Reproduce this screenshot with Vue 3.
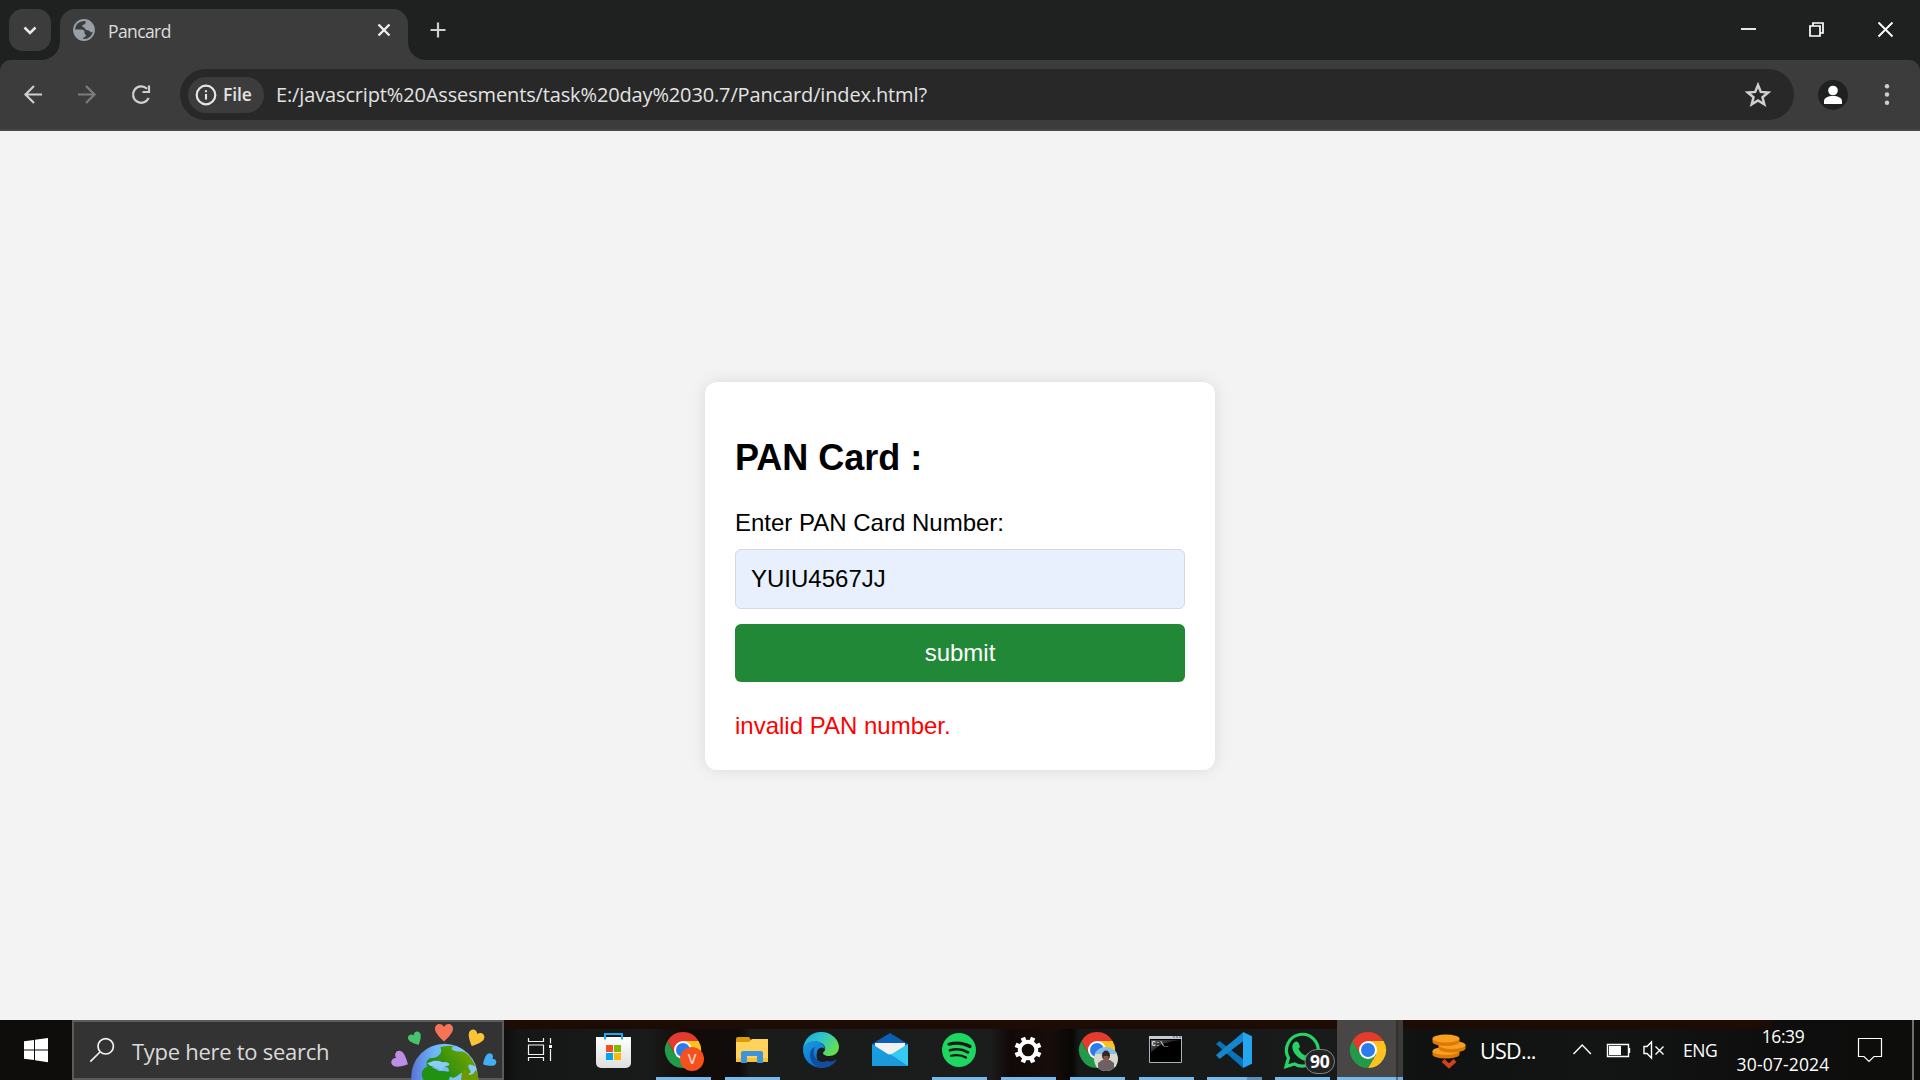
<script setup>
import { ref } from 'vue'

const pan = ref('YUIU4567JJ')
const url = 'E:/javascript%20Assesments/task%20day%2030.7/Pancard/index.html?'

const apps = [
  { id: 'store', x: 580, w: 69 },
  { id: 'chrome-v', x: 649, w: 69, running: true },
  { id: 'explorer', x: 718, w: 69, running: true },
  { id: 'edge', x: 787, w: 69 },
  { id: 'mail', x: 856, w: 69 },
  { id: 'spotify', x: 925, w: 69, running: true },
  { id: 'settings', x: 994, w: 69, running: true },
  { id: 'chrome-photo', x: 1063, w: 69, running: true },
  { id: 'terminal', x: 1132, w: 68, running: true },
  { id: 'code', x: 1200, w: 68, running: true, stacked: true },
  { id: 'whatsapp', x: 1268, w: 69, running: true },
  { id: 'chrome', x: 1337, w: 67, active: true }
]
const chromeCentre = { 'chrome-v': 683, 'chrome-photo': 1097, chrome: 1368 }
const gearTeeth = [22.5, 67.5, 112.5, 157.5, 202.5, 247.5, 292.5, 337.5]
</script>

<template>
  <div class="screen">
    <header class="tabstrip">
      <button class="tab-search" aria-label="Search tabs">
        <svg width="42" height="42" viewBox="9 9 42 42"><path d="M24.5 27.5l5.5 5.5 5.500-5.500" fill="none" stroke="#e8e8e8" stroke-width="2.500" /></svg>
      </button>
      <div class="tab">
        <svg class="globe" width="24" height="24" viewBox="0 0 24 24">
          <circle cx="12" cy="12" r="10" fill="#3c3c3c" stroke="#9aa0a8" stroke-width="1.800" />
          <path d="M14 2.500C18 3.500 21.500 7 21.500 12c0 2-1.500 2.500-3 2-1-2-2.500-1.500-4-2-2-1-1.500-2.500-3.500-3-1.500-.5-1-2 1-2.500 2-.5 1.500-2.500 2-4z" fill="#9aa0a8" />
          <path d="M2.500 11.500H9c3 0 4 1.500 3.500 3.500-.5 1 1.500 1 1.500 3-.5 1-3 1-3 3.500-5-.5-8.500-4.500-8.500-10z" fill="#9aa0a8" />
        </svg>
        <span class="tab-title">Pancard</span>
        <svg class="tab-close" width="18" height="18" viewBox="375 21 18 18"><path d="M378.500 24.500l11 11m0-11l-11 11" stroke="#f0f0f0" stroke-width="2.300" /></svg>
      </div>
      <svg class="new-tab" width="60" height="60" viewBox="408 0 60 60">
        <path d="M408 42V60H426A18 18 0 0 1 408 42z" fill="#3c3c3c" />
        <path d="M438 22.500v15M430.500 30h15" stroke="#cfcfcf" stroke-width="2.200" />
      </svg>
      <svg class="window-controls" width="200" height="60" viewBox="1720 0 200 60">
        <g fill="none" stroke="#fff" stroke-width="1.800">
          <path d="M1741 29h15" />
          <path d="M1810 26h10v10h-10zM1813 25.500V23h10v10h-2.500" stroke-width="1.700" />
          <path d="M1878.500 22.500l14 14m0-14l-14 14" />
        </g>
      </svg>
    </header>

    <div class="toolbar">
      <svg class="nav" width="180" height="69" viewBox="0 60 180 69">
        <g fill="none" stroke-width="2.200">
          <path d="M42 94.500H26M34 86l-8.500 8.500L34 103" stroke="#cfcfcf" />
          <path d="M78 94.500h16M86 86l8.500 8.500L86 103" stroke="#7d7d7d" />
          <path d="M148.700 98A8.200 8.200 0 1 1 147 88.700" stroke="#cfcfcf" />
          <path d="M149 85.500v6.500h-6.500" stroke="#cfcfcf" />
        </g>
      </svg>
      <div class="omnibox">
        <div class="chip">
          <svg width="22" height="22" viewBox="0 0 22 22"><circle cx="11" cy="11" r="9.300" fill="none" stroke="#e6e6e6" stroke-width="2.200" /><path d="M11 10v5.500M11 6.200v2" stroke="#e6e6e6" stroke-width="2.100" /></svg>
          <span>File</span>
        </div>
        <span class="url">{{ url }}</span>
        <svg class="star" width="28" height="28" viewBox="1744 81 28 28"><path d="M1758 85l2.800 6.900 7.400.6-5.700 4.700 1.800 7.200-6.300-3.900-6.300 3.900 1.800-7.200-5.700-4.700 7.400-.6z" fill="none" stroke="#cfcfcf" stroke-width="2.500" /></svg>
      </div>
      <svg width="126" height="69" viewBox="1794 60 126 69">
        <circle cx="1833" cy="95" r="15" fill="#1f2120" />
        <circle cx="1833" cy="90.500" r="4.800" fill="#fff" />
        <path d="M1824 104v-3c0-3 4-5 9-5s9 2 9 5v3z" fill="#fff" />
        <g fill="#cfcfcf"><circle cx="1887" cy="86.300" r="2.200" /><circle cx="1887" cy="94.500" r="2.200" /><circle cx="1887" cy="102.700" r="2.200" /></g>
      </svg>
    </div>

    <main class="page">
      <form class="card" @submit.prevent>
        <h2>PAN Card :</h2>
        <label for="pan">Enter PAN Card Number:</label>
        <input id="pan" v-model="pan" type="text" />
        <button class="submit">submit</button>
        <p class="error">invalid PAN number.</p>
      </form>
    </main>

    <footer class="taskbar">
      <svg width="72" height="60" viewBox="0 1020 72 60">
        <path d="M24 1041.300l10-1.400v9.600H24zM35 1039.800l13-1.900v11.600H35zM24 1050.500h10v9.600l-10-1.400zM35 1050.500h13v11.700l-13-1.900z" fill="#fff" />
      </svg>
      <div class="search">
        <svg width="28" height="28" viewBox="88 1036 28 28"><g fill="none" stroke="#f2f2f2" stroke-width="1.700"><circle cx="105.700" cy="1046.300" r="7.700" /><path d="M100 1052l-9.700 9.700" /></g></svg>
        <span>Type here to search</span>
        <svg class="earth" width="112" height="58" viewBox="390 1022 112 58">
          <defs>
            <linearGradient id="sea" x1="0" x2="1"><stop offset="0" stop-color="#5873d8" /><stop offset=".35" stop-color="#6cb7f6" /><stop offset="1" stop-color="#8fd0fb" /></linearGradient>
            <linearGradient id="land" x1="0" x2="1" y1=".5" y2="0"><stop offset="0" stop-color="#178a12" /><stop offset="1" stop-color="#83a800" /></linearGradient>
            <g id="heart"><path d="M0 8.500C-4 5-9-.5-9-4c0-6 7-6.500 9-2C2-10.500 9-10 9-4 9-.5 4 5 0 8.500z" /></g>
          </defs>
          <circle cx="444.500" cy="1077" r="33.300" fill="url(#sea)" />
          <path d="M441 1047c5-1.500 10-1 13-1-3 1-3 3-.5 4.500 3 2 9-.5 13 3 4 3 7 8 9 13-3-1-6-3.500-7-1-1 3 3 5 2 7s-5-1-8 0-5 4-8 5c-4 1-7-3-6-6 1-2 0-4-3-5-3 1-5-1-8-1-4 1-8 4-10 1s-1-6 2-8c3-1 6 0 9-3 3-2 3-5 2-8.500z" fill="url(#land)" />
          <path d="M426 1067c5-1 9 2 13 4 4 0 9 0 12 2 0 3-3 7-2 9h-24c-4-5-5-11 1-15z" fill="#219111" />
          <path d="M427 1063c4 0 6-3 9-2 4-1 5 2 9 1 5 0 6 4 1 4-4 1-3 5-7 3-3-3-8-1-12-6z" fill="#8bcdf8" />
          <path d="M462 1072c4-4 7-1 7 3 4 0 6-3 7-6l3 11h-18z" fill="#6c9a00" />
          <use href="#heart" transform="translate(444 1033)" fill="#f77357" />
          <use href="#heart" transform="translate(475 1039) rotate(25) scale(.9)" fill="#f9c437" />
          <use href="#heart" transform="translate(415.800 1039.300) rotate(-28) scale(.74)" fill="#46c36c" />
          <use href="#heart" transform="translate(401 1060.500) rotate(-62) scale(.92)" fill="#bd8ee6" />
          <use href="#heart" transform="translate(488.500 1061) rotate(60) scale(.74)" fill="#43aef5" />
        </svg>
      </div>
      <svg width="76" height="60" viewBox="504 1020 76 60">
        <path d="M528.500 1038v3.500h15v-3.500M528.500 1061v-3.500h15v3.500M528.500 1045h15v9.500h-15zM550.500 1038v5.500M550.500 1049v12" fill="none" stroke="#f4f4f4" stroke-width="1.200" />
        <path d="M549 1045h3v3h-3z" fill="#fff" />
      </svg>

      <div v-for="a in apps" :key="a.id" class="app" :class="{ running: a.running, active: a.active, stacked: a.stacked }">
        <svg :width="a.w" height="60" :viewBox="`${a.x} 1020 ${a.w} 60`">
          <g v-if="a.id === 'store'">
            <defs><linearGradient id="bag" x2="0" y2="1"><stop stop-color="#fff" /><stop offset="1" stop-color="#dedede" /></linearGradient></defs>
            <path d="M596 1037h35v26a5 5 0 0 1-5 5h-25a5 5 0 0 1-5-5z" fill="url(#bag)" />
            <path d="M605 1039.500v-5.500h17v5.500" fill="none" stroke="#20a9ec" stroke-width="2" />
            <path d="M606 1045h7v7h-7z" fill="#f25022" /><path d="M614 1045h7v7h-7z" fill="#7fba00" />
            <path d="M606 1053h7v7h-7z" fill="#00a4ef" /><path d="M614 1053h7v7h-7z" fill="#ffb900" />
          </g>
          <g v-if="chromeCentre[a.id]" :transform="`translate(${chromeCentre[a.id]} 1050)`">
            <path d="M-15.600-9A18 18 0 0 1 15.600-9H0L-7.800 4.500z" fill="#e33b2e" />
            <path d="M15.600-9A18 18 0 0 1 0 18L7.800 4.500 0-9z" fill="#fcc31e" />
            <path d="M0 18A18 18 0 0 1-15.600-9L-7.800 4.500H7.800z" fill="#219a4a" />
            <circle r="9" fill="#fff" /><circle r="7" fill="#2b7bea" />
          </g>
          <g v-if="a.id === 'chrome-v'">
            <circle cx="692" cy="1059" r="12" fill="#f4511e" />
            <text x="692" y="1064" text-anchor="middle" class="profile-letter">V</text>
          </g>
          <g v-if="a.id === 'chrome-photo'">
            <defs><clipPath id="photo"><circle cx="1106" cy="1059" r="12" /></clipPath></defs>
            <g clip-path="url(#photo)">
              <path d="M1094 1047h24v24h-24z" fill="#d9d9d0" /><path d="M1094 1047h24v7h-24z" fill="#84bfe5" />
              <path d="M1098 1071v-8l4-3h8l4 3v8z" fill="#6d6065" /><ellipse cx="1106" cy="1055.500" rx="4" ry="5" fill="#352724" />
              <path d="M1103.500 1056h5v4l-2.500 2-2.500-2z" fill="#80594a" /><path d="M1094 1065l4 1v5h-4zM1115 1065h4v6h-4z" fill="#eee" />
            </g>
          </g>
          <g v-if="a.id === 'explorer'">
            <path d="M736 1039a2 2 0 0 1 2-2h11l2 3v5h-15z" fill="#dd9b09" />
            <path d="M736 1042h13l3-3h16v23h-32z" fill="#ffd25c" />
            <path d="M736 1058h32v4h-32z" fill="#f7c33f" />
            <path d="M741 1063v-10a2 2 0 0 1 2-2h18a2 2 0 0 1 2 2v10h-6v-7h-10v7z" fill="#3b94dc" />
          </g>
          <g v-if="a.id === 'edge'">
            <defs>
              <linearGradient id="edge-top" x1="0" x2="1" y2=".6"><stop stop-color="#17a5e5" /><stop offset=".5" stop-color="#31c5c7" /><stop offset="1" stop-color="#65df4c" /></linearGradient>
              <linearGradient id="edge-left" x2=".6" y2="1"><stop stop-color="#1c9be0" /><stop offset="1" stop-color="#0870cd" /></linearGradient>
            </defs>
            <path d="M803 1049c1-10 8-17 18-17 11 0 18 8 18 15 0 6-5 9-10 9-4 0-6-2-6-3s3-2 2-6c-2-6-16-9-22 2z" fill="url(#edge-top)" />
            <path d="M803 1050c0-5 5-9 11-9 7 0 11 4 11 8-2-2-7-2-8 3-2 7 3 15 8 16-12 1-22-7-22-18z" fill="url(#edge-left)" />
            <path d="M815 1047c-4 8 2 18 12 14 4 1 7 0 10-2-3 6-9 9-15 9-8 0-12-7-12-13 0-4 2-7 5-8z" fill="#114ea0" />
          </g>
          <g v-if="a.id === 'mail'">
            <path d="M872 1044l18-11 18 11v7h-36z" fill="#0b60b5" />
            <path d="M875 1043h30v10l-15 10-15-10z" fill="#f2f2f2" />
            <path d="M872 1044l19 12 17-12v22h-36z" fill="#199cde" />
            <path d="M908 1044v22l-18-11z" fill="#36c9f4" /><path d="M872 1066h36l-18-12z" fill="#1b99dc" />
          </g>
          <g v-if="a.id === 'spotify'">
            <circle cx="959" cy="1050" r="17" fill="#1ed760" />
            <g fill="none" stroke="#181818" stroke-linecap="round"><path d="M949 1044.200c8-2.200 15-1 21 2.300" stroke-width="3.200" /><path d="M950 1050.300c7-2 13-1 18 2" stroke-width="2.700" /><path d="M951 1055.800c6-1.500 11-.7 15 1.700" stroke-width="2.200" /></g>
          </g>
          <g v-if="a.id === 'settings'" transform="translate(1028 1050)">
            <circle r="8.300" fill="none" stroke="#fff" stroke-width="4" />
            <rect v-for="t in gearTeeth" :key="t" x="-2.300" y="-13.500" width="4.600" height="5" fill="#fff" :transform="`rotate(${t})`" />
          </g>
          <g v-if="a.id === 'terminal'">
            <defs><linearGradient id="glass" x2="1" y2=".6"><stop stop-color="#555" /><stop offset="1" stop-color="#050505" /></linearGradient></defs>
            <path d="M1149.500 1036.500h32v26h-32z" fill="#000" stroke="#aab1b7" />
            <path d="M1149 1036h33v3h-33z" fill="#c3cbd1" /><path d="M1151 1040h30q-18 1-30 12z" fill="url(#glass)" />
            <text x="1151.500" y="1045.500" class="prompt">C:\_</text>
            <path d="M1173 1037h2m1 0h2m1 0h2" stroke="#526273" />
          </g>
          <g v-if="a.id === 'code'">
            <path d="M1243 1041v18l-23.500-18-3.500 3 27 24v-9z" fill="#0873b9" />
            <path d="M1216 1055l3.500 4 24-18v-9z" fill="#1687cd" />
            <path d="M1243 1032l9 4.300v27.500l-9 4.200z" fill="#25a5f1" />
          </g>
          <g v-if="a.id === 'whatsapp'">
            <path d="M1286 1066.500l2.500-8.500a15.900 15.900 0 1 1 5.800 5.900z" fill="none" stroke="#25d366" stroke-width="3.200" />
            <path d="M1295 1042c2-1 3-.5 4 2l1 2.500c0 1-1.500 2-1.500 2.500 2 3.500 4 5.500 7 6.500l2.500-2.500 5 2.500c0 4-3 5.500-5.500 5.500-8 0-16-9-15-15 0-2 1-3 2.500-4z" fill="#25d366" />
            <rect x="1305" y="1049.500" width="29.500" height="24" rx="12" fill="#222525" stroke="#858585" />
            <text x="1319.700" y="1067.700" text-anchor="middle" class="badge">90</text>
          </g>
        </svg>
      </div>

      <div class="news">
        <svg width="62" height="60" viewBox="1418 1020 62 60">
          <g v-for="c in [[1446, 1051], [1452, 1045], [1446, 1038.500]]" :key="c[1]">
            <path :d="`M${c[0] - 13.500} ${c[1]}v3.500a13.500 4 0 0 0 27 0v-3.500z`" fill="#dc790b" />
            <ellipse :cx="c[0]" :cy="c[1]" rx="13.500" ry="4" fill="#f8a01d" />
          </g>
          <path d="M1443 1060.500l6 5.500 6-5.500" fill="none" stroke="#d2421b" stroke-width="4" />
        </svg>
        <span>USD...</span>
      </div>
      <svg width="143" height="60" viewBox="1540 1020 143 60">
        <g fill="none" stroke="#fff" stroke-width="1.400">
          <path d="M1573.500 1054l8.700-9 8.700 9" /><path d="M1607.500 1044.500h21v12h-21zM1629.500 1048v5" />
          <path d="M1644 1046.500h3l4.500-4.500v16l-4.500-4.500h-3zM1655.500 1046.500l8 8m0-8l-8 8" />
        </g>
        <path d="M1609 1046h12v9h-12z" fill="#fff" />
      </svg>
      <span class="lang">ENG</span>
      <div class="clock"><span>16:39</span><span class="date">30-07-2024</span></div>
      <svg class="notify" width="84" height="60" viewBox="1836 1020 84 60">
        <path d="M1858.500 1038.500h23v18h-7.500l-5 5-5-5h-5.500z" fill="none" stroke="#fff" stroke-width="1.200" />
        <path d="M1912 1020h2v60h-2z" fill="#6f6f6f" />
      </svg>
    </footer>
  </div>
</template>

<style>
body { overflow: hidden; background: #f3f3f3; }
</style>

<style scoped>
* { box-sizing: border-box; }
svg { display: block; flex: none; }
button { border: 0; padding: 0; }
.screen { width: 1920px; height: 1080px; display: flex; flex-direction: column; font-family: "Open Sans", "Noto Sans", sans-serif; background: #1f2120; }
.tabstrip { height: 60px; display: flex; background: #1f2120; }
.tab-search { width: 42px; height: 42px; margin: 9px 0 0 9px; border-radius: 14px; background: #3c3c3c; }
.tab { position: relative; width: 348px; height: 51px; margin: 9px 0 0 9px; padding: 0 15px 9px 12px; display: flex; align-items: center; border-radius: 15px 15px 0 0; background: #3c3c3c; color: #dedede; }
.tab::before { content: ""; position: absolute; left: -18px; bottom: 0; width: 18px; height: 18px; background: radial-gradient(circle at 0 0, transparent 17.5px, #3c3c3c 18px); }
.tab-title { margin: 2px 0 0 12px; font-size: 17.5px; letter-spacing: -.6px; }
.tab-close { margin-left: auto; }
.window-controls { margin-left: auto; }
.toolbar { height: 71px; display: flex; background: #3c3c3c; border-bottom: 2px solid #484848; border-radius: 11px 11px 0 0; }
.omnibox { width: 1614px; height: 51px; margin-top: 9px; padding: 0 22px 0 8px; display: flex; align-items: center; border-radius: 26px; background: #282828; color: #e3e3e3; }
.chip { width: 76px; height: 36px; padding-left: 7px; display: flex; align-items: center; gap: 6px; border-radius: 18px; background: #3c3c3c; font-size: 17.5px; font-weight: 600; line-height: 34px; letter-spacing: -.1px; }
.chip span { margin-top: -1px; }
.url { margin-left: 12px; font-size: 20px; letter-spacing: -.14px; white-space: nowrap; }
.star { margin-left: auto; }
.page { height: 889px; display: flex; justify-content: center; align-items: center; background: #f3f3f3; font-family: "Liberation Sans", Arial, sans-serif; font-size: 24px; line-height: 28px; color: #000; }
.card { width: 510px; height: 388px; margin-top: 1px; padding: 55px 30px 30px; display: flex; flex-direction: column; border-radius: 12px; background: #fff; box-shadow: 0 0 15px rgba(0, 0, 0, .1); }
h2 { margin: 0 0 30px; font-size: 36px; line-height: 42px; }
input { height: 60px; margin: 12px 0 15px; padding: 0 15px; border: 1px solid #d9d9d9; border-radius: 6px; outline: 0; background: #e8f0fe; font: inherit; color: #000; }
.submit { height: 58px; border-radius: 6px; background: #218838; color: #fff; font: inherit; }
.error { margin: 30px 0 0; color: #f00; }
.taskbar { height: 60px; display: flex; color: #fff; background:
  linear-gradient(90deg, transparent 504px, #1c0c05 504px 1773px, transparent 1773px) 0 0 / 100% 9px no-repeat,
  linear-gradient(90deg, #0e0d0c 0 504px, #151717 520px, #191a1a 650px, #110b08 690px, #100c0b 740px, #1a1b1b 750px, #1b1c1c 990px, #110907 1010px, #170e0b 1050px, #080706 1072px, #171919 1080px, #191a1a 1330px, #101111 1420px, #131414 1600px, #0e0e0e 1770px, #0d0d0c); }
.search { flex: none; width: 432px; height: 60px; padding-left: 14px; display: flex; align-items: center; border: 2px solid #5b5b5b; background: #333; color: #dadada; }
.search span { margin: 2px 0 0 16px; font-size: 22px; letter-spacing: -.28px; white-space: nowrap; }
.earth { margin: 0 0 -2px auto; }
.app { flex: none; position: relative; height: 60px; }
.running::after { content: ""; position: absolute; left: 7px; bottom: 0; width: 55px; height: 3px; background: #76b9ed; }
.stacked::after { background: linear-gradient(90deg, #76b9ed 40px, #5c8fb5 40px); }
.active { background: linear-gradient(90deg, #484746 59px, #30302f 59px 61px, #3b3b3a 61px 66px, transparent 66px); }
.active::after { content: ""; position: absolute; left: 0; bottom: 0; width: 66px; height: 3px; background: linear-gradient(90deg, #76b9ed 59px, #497697 59px 61px, #6faedf 61px); }
.profile-letter { font: 600 14px "Open Sans", sans-serif; fill: #fbd0c0; }
.prompt { font: 700 7px "Liberation Mono", monospace; fill: #eee; }
.badge { font: 700 17.5px "Open Sans", sans-serif; letter-spacing: -.3px; fill: #fff; }
.news { flex: none; width: 122px; display: flex; align-items: center; margin-left: 14px; }
.news span { margin-top: 1px; font-size: 21.5px; letter-spacing: -.7px; }
.lang { flex: none; width: 53px; padding-left: 0; font-size: 17.5px; line-height: 60px; letter-spacing: -.4px; }
.clock { flex: none; width: 94px; display: flex; flex-direction: column; align-items: center; justify-content: center; font-size: 17.5px; line-height: 28px; letter-spacing: -.45px; white-space: nowrap; }
.date { letter-spacing: .15px; }
.notify { margin-left: auto; }
</style>
